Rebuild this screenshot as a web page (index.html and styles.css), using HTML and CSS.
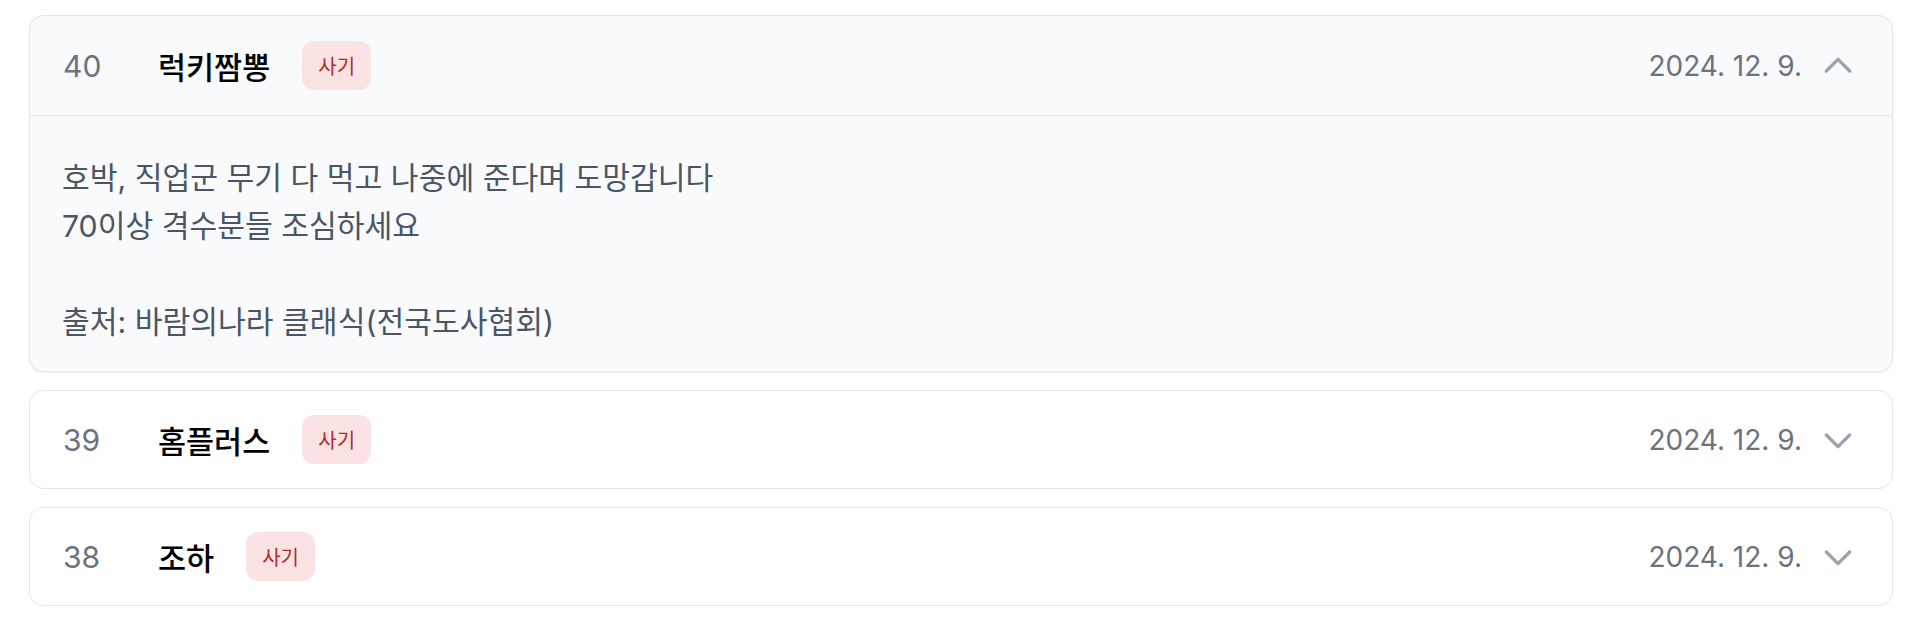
FILE: index.html
```html
<!DOCTYPE html>
<html lang="ko">
<head>
<meta charset="utf-8">
<title>목록</title>
<link rel="stylesheet" href="styles.css">
</head>
<body>
<div class="list">
  <div class="card open">
    <div class="head">
      <div class="left">
        <span class="num">40</span>
        <span class="title">럭키짬뽕</span>
        <span class="badge">사기</span>
      </div>
      <div class="right">
        <span class="date">2024. 12. 9.</span>
        <svg class="chev" viewBox="0 0 24 24" width="40" height="40" fill="none" stroke="#9ca3af" stroke-width="2" stroke-linecap="round" stroke-linejoin="round"><path d="M5 15l7-7 7 7"/></svg>
      </div>
    </div>
    <div class="body">호박, 직업군 무기 다 먹고 나중에 준다며 도망갑니다
70이상 격수분들 조심하세요

출처: 바람의나라 클래식(전국도사협회)</div>
  </div>
  <div class="card">
    <div class="head">
      <div class="left">
        <span class="num">39</span>
        <span class="title">홈플러스</span>
        <span class="badge">사기</span>
      </div>
      <div class="right">
        <span class="date">2024. 12. 9.</span>
        <svg class="chev" viewBox="0 0 24 24" width="40" height="40" fill="none" stroke="#9ca3af" stroke-width="2" stroke-linecap="round" stroke-linejoin="round"><path d="M19 9l-7 7-7-7"/></svg>
      </div>
    </div>
  </div>
  <div class="card">
    <div class="head">
      <div class="left">
        <span class="num">38</span>
        <span class="title">조하</span>
        <span class="badge">사기</span>
      </div>
      <div class="right">
        <span class="date">2024. 12. 9.</span>
        <svg class="chev" viewBox="0 0 24 24" width="40" height="40" fill="none" stroke="#9ca3af" stroke-width="2" stroke-linecap="round" stroke-linejoin="round"><path d="M19 9l-7 7-7-7"/></svg>
      </div>
    </div>
  </div>
</div>
</body>
</html>
```

FILE: styles.css
```css
html, body {
  margin: 0;
  padding: 0;
  background: #ffffff;
}
body {
  font-family: Inter, "Noto Sans CJK KR", sans-serif;
}
.list {
  display: flex;
  flex-direction: column;
  gap: 18px;
  padding: 15px 37px 0 29px;
}
.card {
  border: 1px solid #e5e7eb;
  border-radius: 14px;
  background: #ffffff;
  overflow: hidden;
}
.card.open {
  background: #f9fafb;
  box-shadow: 0 1px 2px rgba(0, 0, 0, 0.06);
}
.head {
  height: 97px;
  display: flex;
  align-items: center;
  justify-content: space-between;
  padding: 0 34px 0 32px;
}
.open .head {
  height: 99px;
  border-bottom: 1px solid #e5e7eb;
}
.left, .right {
  display: flex;
  align-items: center;
}
.num {
  width: 96px;
  font-size: 30px;
  color: #6b7280;
  padding-left: 1px;
  box-sizing: border-box;
}
.title {
  font-size: 30.5px;
  font-weight: 500;
  color: #000000;
}
.badge {
  margin-left: 32px;
  height: 49px;
  padding: 0 16px;
  display: inline-flex;
  align-items: center;
  background: #fbe3e3;
  color: #b42a2a;
  border-radius: 12px;
  font-size: 20px;
}
.right {
  gap: 16px;
}
.date {
  font-size: 28px;
  color: #6b7280;
}
.chev {
  display: block;
}
.body {
  white-space: pre-wrap;
  padding: 38px 32px 25px 32px;
  font-size: 30.2px;
  line-height: 48px;
  color: #4b5563;
}
```
